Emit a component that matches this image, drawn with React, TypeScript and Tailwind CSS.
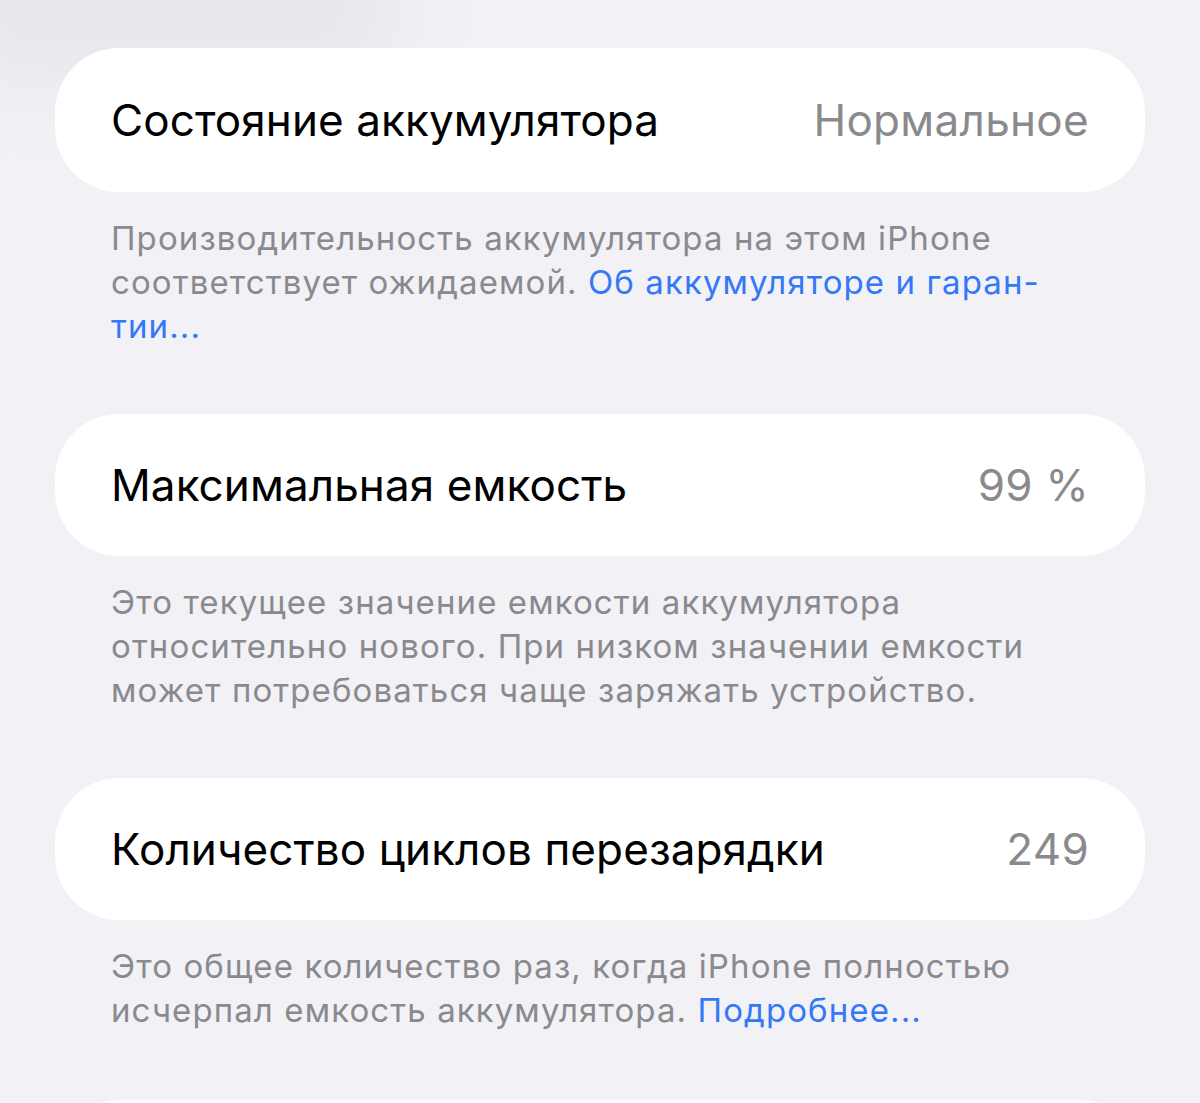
const sections = [
  {
    title: "Состояние аккумулятора",
    value: "Нормальное",
    h: "h-[144px]",
    gap: "mb-[66px]",
    lines: [
      <>Производительность аккумулятора на этом iPhone</>,
      <>
        соответствует ожидаемой.{" "}
        <span className="text-[#3478f6]">Об аккумуляторе и гаран-</span>
      </>,
      <span className="text-[#3478f6]">тии...</span>,
    ],
  },
  {
    title: "Максимальная емкость",
    value: "99 %",
    h: "h-[142px]",
    gap: "mb-[66px]",
    lines: [
      <>Это текущее значение емкости аккумулятора</>,
      <>относительно нового. При низком значении емкости</>,
      <>может потребоваться чаще заряжать устройство.</>,
    ],
  },
  {
    title: "Количество циклов перезарядки",
    value: "249",
    h: "h-[142px]",
    gap: "mb-[68px]",
    lines: [
      <>Это общее количество раз, когда iPhone полностью</>,
      <>
        исчерпал емкость аккумулятора.{" "}
        <span className="text-[#3478f6]">Подробнее...</span>
      </>,
    ],
  },
];

function Row({ title, value, h }: { title: string; value: string; h: string }) {
  return (
    <div className={`${h} flex items-center justify-between rounded-[64px] bg-white px-[56px]`}>
      <span className="text-[44px] leading-none tracking-[0.1px] text-black">{title}</span>
      <span className="text-[44px] leading-none tracking-[0.3px] text-[#8a8a8e]">{value}</span>
    </div>
  );
}

export default function App() {
  return (
    <div
      className="relative h-[1103px] w-[1200px] overflow-hidden bg-[#f1f1f6] px-[55px] pt-[48px]"
      style={{ fontFamily: "Inter, 'Noto Sans', sans-serif" }}
    >
      <div className="pointer-events-none absolute -left-[60px] -top-[60px] h-[140px] w-[460px] rounded-full bg-[#e6e6ec] blur-[40px]" />
      <div className="relative flex flex-col">
        {sections.map((s, i) => (
          <div key={i} className={`${s.gap} flex flex-col`}>
            <Row title={s.title} value={s.value} h={s.h} />
            <div className="mt-[24px] px-[56px] text-[33px] leading-[44px] tracking-[1.1px] text-[#8a8a8e]">
              {s.lines.map((l, j) => (
                <div key={j} className="whitespace-nowrap">
                  {l}
                </div>
              ))}
            </div>
          </div>
        ))}
        <div className="h-[142px] rounded-[64px] bg-white" />
      </div>
    </div>
  );
}
